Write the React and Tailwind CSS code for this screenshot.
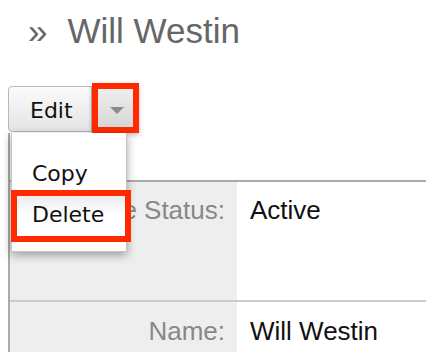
export default function App() {
  const sans = { fontFamily: '"Liberation Sans", Arial, sans-serif' };
  const ui = { fontFamily: '"DejaVu Sans", "Lucida Grande", sans-serif' };
  return (
    <div className="w-[426px] h-[352px] overflow-hidden bg-white relative" style={sans}>
      <div className="pt-[11px] pl-[28px] flex items-baseline leading-[40px] text-[35px] text-[#666]">
        <span>»</span>
        <span className="ml-[20px]">Will Westin</span>
      </div>

      <div className="relative z-10 ml-[8px] mt-[32px] flex items-start" style={ui}>
        <div className="mt-[3px] h-[46px] w-[84px] border border-[#b8b8b8] rounded-l-[4px] bg-gradient-to-b from-[#fbfbfb] to-[#e4e4e4] pl-[21px] pt-[11px] text-[22px] leading-[26px] text-[#111]">
          Edit
        </div>
        <div className="h-[50px] w-[47px] border-[6px] border-[#ff2a00] bg-gradient-to-b from-[#eeeeee] to-[#d6d6d6] flex items-center justify-center shadow-[0_2px_5px_rgba(0,0,0,0.25)]">
          <svg width="14" height="7" viewBox="0 0 14 7" className="ml-[3px] mt-[4px]">
            <polygon points="0,0 14,0 7,7" fill="#8a8a8a" />
          </svg>
        </div>

        <div className="absolute left-[3px] top-[50px] w-[116px] h-[119px] bg-white border-x border-b border-[#c4c4c4] shadow-[0_3px_9px_rgba(0,0,0,0.35)]">
          <div className="mt-[28px] h-[26px] pl-[20px] text-[22px] leading-[26px] text-[#111]">Copy</div>
          <div className="mt-[3px] -ml-[1px] w-[120px] h-[52px] border-[6px] border-[#ff2a00] bg-gradient-to-b from-[#ececec] via-white to-white pl-[15px] pt-[6px] text-[22px] leading-[26px] text-[#111]">
            Delete
          </div>
        </div>
      </div>

      <div className="ml-[8px] border-l-2 border-[#aaaaaa] pt-[47px]">
        <div className="border-t-2 border-[#aaaaaa]">
          <div className="grid grid-cols-[227px_1fr] h-[120px] border-b-2 border-[#cccccc] text-[26px] leading-[30px]">
            <div className="bg-[#eeeeee] text-right pr-[12px] pt-[13px] text-[#888]">Employee Status:</div>
            <div className="pl-[13px] pt-[13px] text-[#111]">Active</div>
          </div>
          <div className="grid grid-cols-[227px_1fr] h-[60px] text-[26px] leading-[30px]">
            <div className="bg-[#eeeeee] text-right pr-[12px] pt-[14px] text-[#888]">Name:</div>
            <div className="pl-[13px] pt-[14px] text-[#111]">Will Westin</div>
          </div>
        </div>
      </div>
    </div>
  );
}
